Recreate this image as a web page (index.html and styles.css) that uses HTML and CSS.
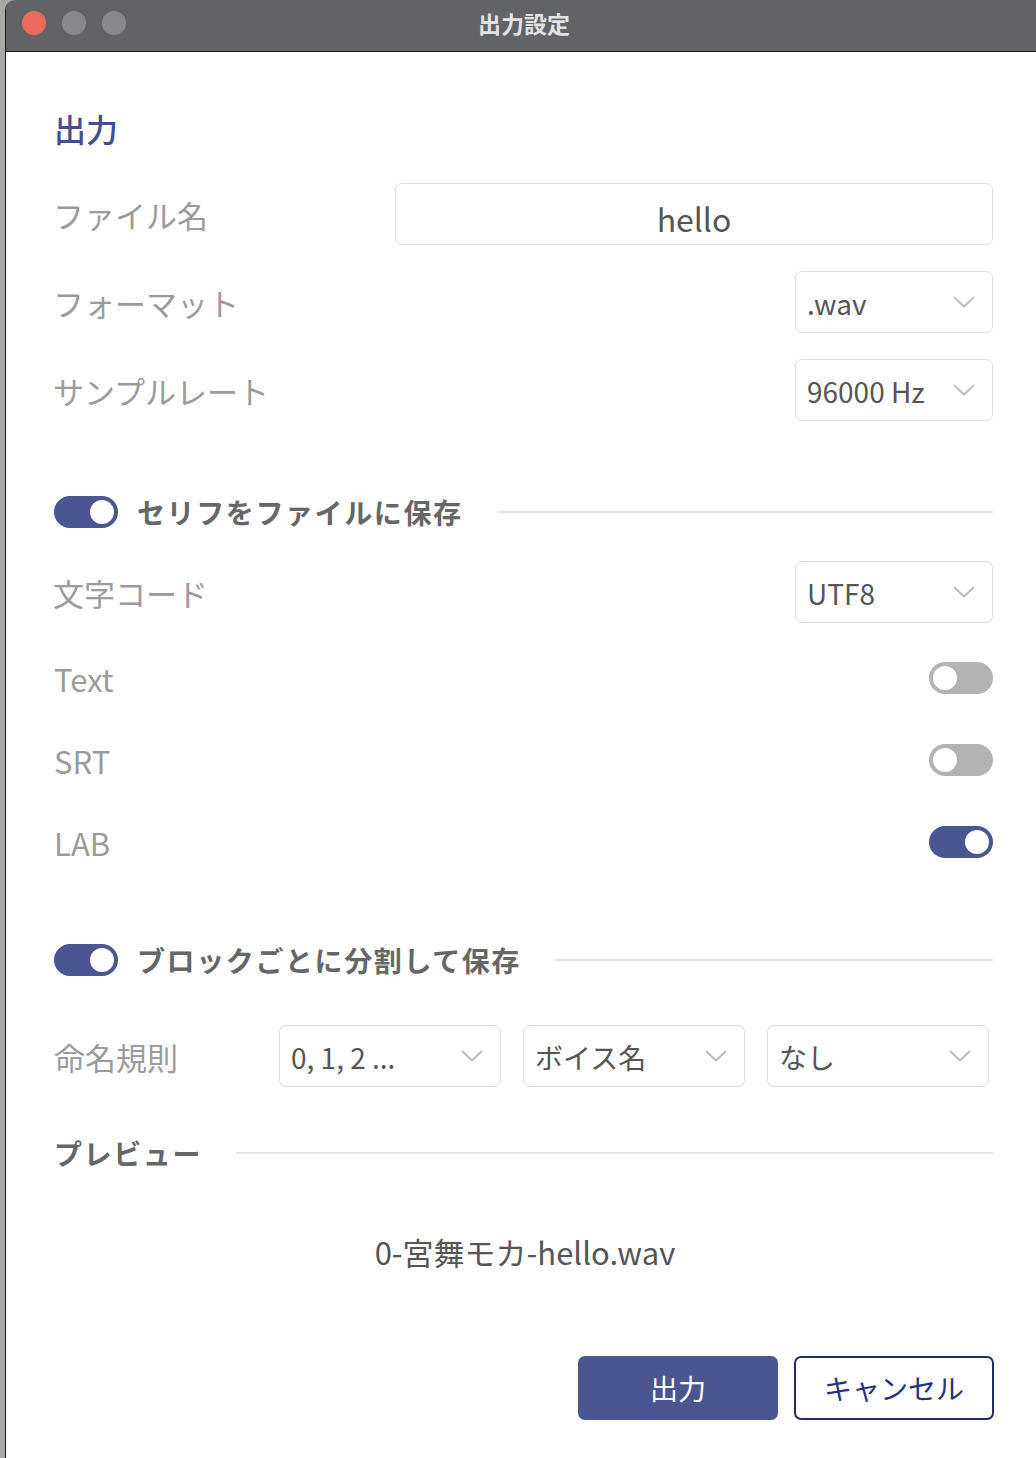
FILE: index.html
```html
<!DOCTYPE html>
<html lang="ja">
<head>
<meta charset="utf-8">
<title>出力設定</title>
<link rel="stylesheet" href="styles.css">
</head>
<body>
<div class="desk"></div>
<div class="window">
  <div class="titlebar">
    <div class="lights">
      <span class="light red"></span>
      <span class="light grey"></span>
      <span class="light grey"></span>
    </div>
    <div class="title">出力設定</div>
  </div>
  <div class="content">
    <div class="heading">出力</div>

    <div class="row field-row r1">
      <div class="label">ファイル名</div>
      <div class="input">hello</div>
    </div>

    <div class="row field-row r2">
      <div class="label">フォーマット</div>
      <div class="select">
        <span>.wav</span>
        <svg class="chev" width="22" height="12" viewBox="0 0 22 12"><path d="M1 1 L11 10.5 L21 1" fill="none" stroke="#bdbdbd" stroke-width="2"/></svg>
      </div>
    </div>

    <div class="row field-row r3">
      <div class="label">サンプルレート</div>
      <div class="select">
        <span>96000 Hz</span>
        <svg class="chev" width="22" height="12" viewBox="0 0 22 12"><path d="M1 1 L11 10.5 L21 1" fill="none" stroke="#bdbdbd" stroke-width="2"/></svg>
      </div>
    </div>

    <div class="row section s1">
      <span class="toggle on"><span class="knob"></span></span>
      <span class="section-label">セリフをファイルに保存</span>
      <span class="rule"></span>
    </div>

    <div class="row field-row r4">
      <div class="label">文字コード</div>
      <div class="select">
        <span>UTF8</span>
        <svg class="chev" width="22" height="12" viewBox="0 0 22 12"><path d="M1 1 L11 10.5 L21 1" fill="none" stroke="#bdbdbd" stroke-width="2"/></svg>
      </div>
    </div>

    <div class="row switch-row t1">
      <div class="label">Text</div>
      <span class="toggle off"><span class="knob"></span></span>
    </div>
    <div class="row switch-row t2">
      <div class="label">SRT</div>
      <span class="toggle off"><span class="knob"></span></span>
    </div>
    <div class="row switch-row t3">
      <div class="label">LAB</div>
      <span class="toggle on"><span class="knob"></span></span>
    </div>

    <div class="row section s2">
      <span class="toggle on"><span class="knob"></span></span>
      <span class="section-label">ブロックごとに分割して保存</span>
      <span class="rule"></span>
    </div>

    <div class="row naming">
      <div class="label naming-label">命名規則</div>
      <div class="select small">
        <span>0, 1, 2 ...</span>
        <svg class="chev" width="22" height="12" viewBox="0 0 22 12"><path d="M1 1 L11 10.5 L21 1" fill="none" stroke="#bdbdbd" stroke-width="2"/></svg>
      </div>
      <div class="select small">
        <span>ボイス名</span>
        <svg class="chev" width="22" height="12" viewBox="0 0 22 12"><path d="M1 1 L11 10.5 L21 1" fill="none" stroke="#bdbdbd" stroke-width="2"/></svg>
      </div>
      <div class="select small">
        <span>なし</span>
        <svg class="chev" width="22" height="12" viewBox="0 0 22 12"><path d="M1 1 L11 10.5 L21 1" fill="none" stroke="#bdbdbd" stroke-width="2"/></svg>
      </div>
    </div>

    <div class="row section preview-head">
      <span class="section-label">プレビュー</span>
      <span class="rule"></span>
    </div>

    <div class="preview">0-宮舞モカ-hello.wav</div>

    <div class="buttons">
      <button class="btn primary">出力</button>
      <button class="btn secondary">キャンセル</button>
    </div>
  </div>
</div>
</body>
</html>
```
FILE: styles.css
```css
html, body {
  margin: 0;
  padding: 0;
  height: 100%;
}
body {
  display: flex;
  background: #a8a8a8;
  font-family: "Noto Sans CJK JP", "Noto Sans", sans-serif;
  overflow: hidden;
}
.desk {
  width: 5px;
  flex: none;
  background: #a9a9a9;
}
.window {
  flex: 1;
  background: #ffffff;
  border-left: 1px solid #1c1c1c;
  border-top-left-radius: 10px;
  display: flex;
  flex-direction: column;
  min-width: 0;
}
.titlebar {
  height: 52px;
  box-sizing: border-box;
  padding-bottom: 6px;
  background: #626367;
  border-bottom: 1px solid #1e1e1e;
  border-top-left-radius: 9px;
  display: flex;
  align-items: center;
  position: relative;
  flex: none;
}
.lights {
  display: flex;
  gap: 16px;
  padding-left: 16px;
}
.light {
  width: 24px;
  height: 24px;
  border-radius: 50%;
  display: block;
}
.light.red { background: #ec6a5e; }
.light.grey { background: #88898d; }
.title {
  position: absolute;
  left: 6px;
  right: 0;
  top: 0;
  bottom: 6px;
  display: flex;
  align-items: center;
  justify-content: center;
  color: #e2e2e4;
  font-size: 23px;
  font-weight: 700;
  pointer-events: none;
}
.content {
  padding: 56px 43px 0 47px;
  display: flex;
  flex-direction: column;
}
.heading {
  height: 40px;
  line-height: 40px;
  font-size: 32px;
  font-weight: 500;
  color: #434e8e;
  margin-left: 1px;
}
.row {
  display: flex;
  align-items: center;
}
.label {
  font-size: 31px;
  color: #9b9b9b;
  line-height: 1;
  white-space: nowrap;
}
.field-row {
  height: 62px;
  justify-content: space-between;
}
.r1 { margin-top: 35px; }
.r2 { margin-top: 26px; }
.r3 { margin-top: 26px; }
.r4 { margin-top: 33px; }
.input {
  width: 598px;
  height: 62px;
  border: 1px solid #dedede;
  border-radius: 7px;
  display: flex;
  align-items: center;
  justify-content: center;
  font-size: 32px;
  color: #555;
  padding-top: 7px;
  box-sizing: border-box;
}
.select {
  width: 198px;
  height: 62px;
  box-sizing: border-box;
  border: 1px solid #dedede;
  border-radius: 7px;
  display: flex;
  align-items: center;
  justify-content: space-between;
  padding: 0 16px 0 11px;
  font-size: 28px;
  color: #555;
}
.select span {
  line-height: 1;
  padding-top: 2px;
}
.chev {
  display: block;
  flex: none;
  margin-bottom: 1px;
  margin-right: 1px;
}
.section {
  height: 32px;
}
.s1 { margin-top: 75px; }
.s2 { margin-top: 86px; }
.section .toggle {
  margin-left: 1px;
}
.section-label {
  font-size: 28px;
  font-weight: 700;
  color: #666666;
  letter-spacing: 1.6px;
  margin-left: 19px;
  white-space: nowrap;
  line-height: 1;
}
.rule {
  flex: 1;
  height: 2px;
  background: #e6e6e6;
  margin-left: 34px;
}
.toggle {
  width: 64px;
  height: 32px;
  border-radius: 16px;
  display: flex;
  align-items: center;
  box-sizing: border-box;
  padding: 0 4px;
  flex: none;
}
.toggle .knob {
  width: 24px;
  height: 24px;
  border-radius: 50%;
  background: #ffffff;
  display: block;
}
.toggle.on {
  background: #4a5592;
  justify-content: flex-end;
}
.toggle.off {
  background: #b3b3b3;
  justify-content: flex-start;
}
.switch-row {
  height: 32px;
  justify-content: space-between;
}
.switch-row .label {
  margin-left: 1px;
}
.t1 { margin-top: 39px; }
.t2 { margin-top: 50px; }
.t3 { margin-top: 50px; }
.naming {
  height: 62px;
  margin-top: 49px;
  gap: 22px;
  padding-right: 4px;
}
.naming-label {
  width: 203px;
  flex: none;
  margin-left: 1px;
}
.select.small {
  width: 222px;
  flex: none;
}
.preview-head {
  margin-top: 50px;
}
.preview-head .section-label {
  margin-left: 1px;
}
.preview {
  margin-top: 63px;
  height: 40px;
  line-height: 40px;
  text-align: center;
  font-size: 31px;
  color: #555555;
  padding-left: 4px;
}
.buttons {
  margin-top: 84px;
  display: flex;
  justify-content: flex-end;
  gap: 16px;
}
.btn {
  width: 200px;
  height: 64px;
  border-radius: 7px;
  font-family: "Noto Sans CJK JP", "Noto Sans", sans-serif;
  font-size: 28px;
  box-sizing: border-box;
  padding: 0;
  cursor: pointer;
}
.btn.primary {
  background: #4b5691;
  color: #ffffff;
  border: none;
}
.btn.secondary {
  background: #ffffff;
  color: #27327a;
  border: 2px solid #202b6f;
  margin-right: -1px;
}
```
